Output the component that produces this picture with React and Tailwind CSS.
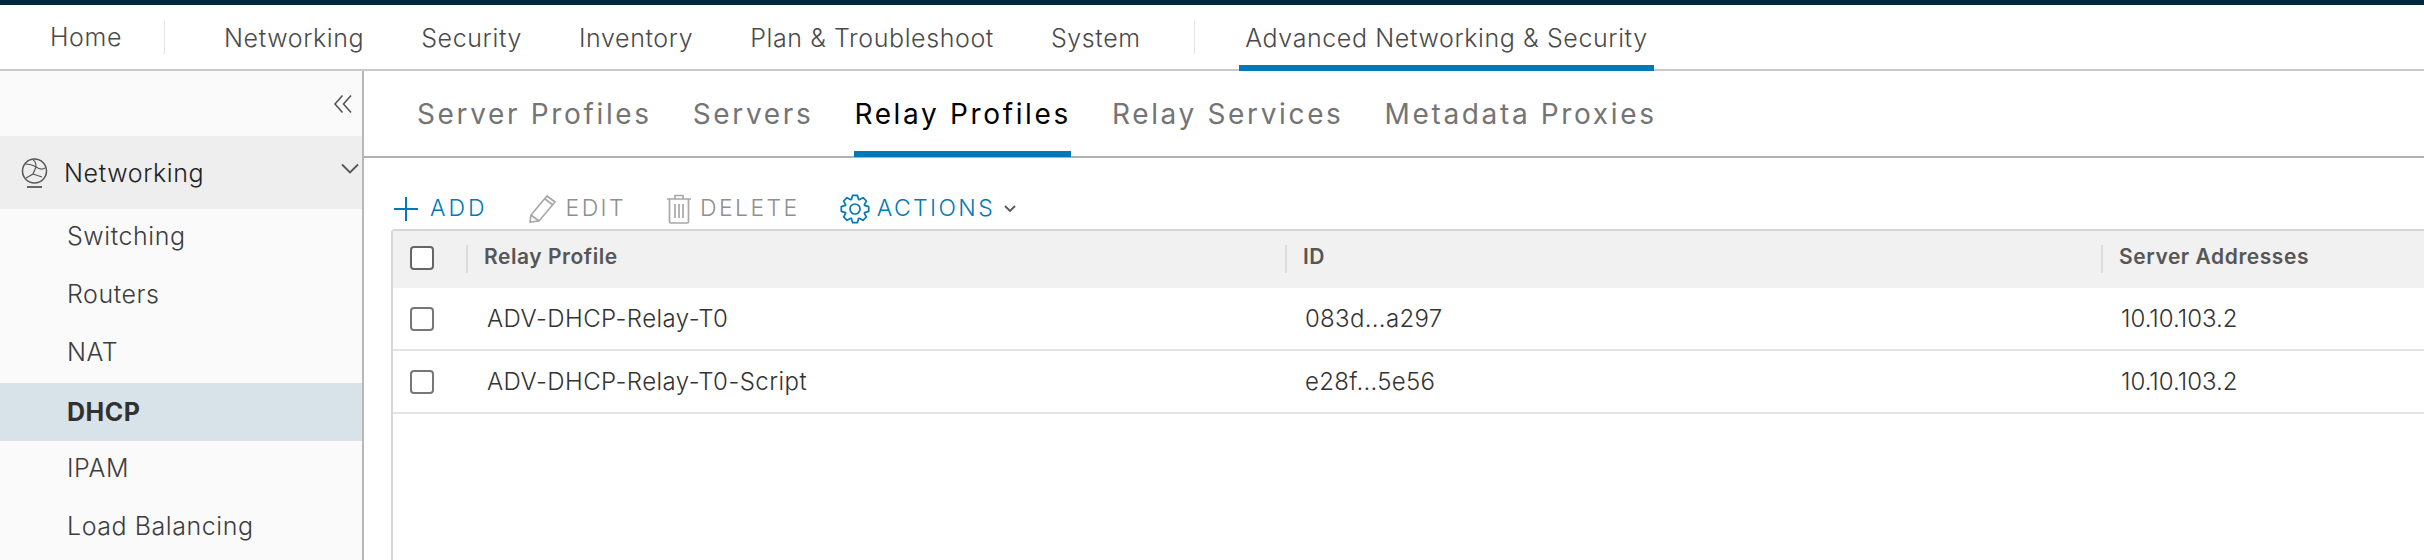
const FONT = "font-['Inter','Noto_Sans',sans-serif]";

const gearPath = (() => {
  const pts = [];
  for (let i = 0; i < 8; i++) {
    const a = (i * Math.PI) / 4 - Math.PI / 2;
    const at = (r, d) => `${(15 + r * Math.cos(a + d)).toFixed(2)} ${(15 + r * Math.sin(a + d)).toFixed(2)}`;
    pts.push(at(10.2, -0.36), at(13.9, -0.17), at(13.9, 0.17), at(10.2, 0.36));
  }
  return "M" + pts.join("L") + "Z";
})();

function NavItem({ children, className = "" }) {
  return <span className={`text-[25px] font-light tracking-[0.6px] leading-none text-[#4a4a4a] whitespace-nowrap ${className}`}>{children}</span>;
}

function Divider() {
  return <div className="w-px h-[33px] bg-[#e4e4e4]" />;
}

function SubTab({ children, active }) {
  return (
    <div className={`h-full flex items-center border-b-[6px] tracking-[2.65px] text-[28px] whitespace-nowrap -mb-[1px] pt-[6px] ${active ? "border-[#0079b8] text-black" : "border-transparent text-[#747474]"}`}>
      {children}
    </div>
  );
}

function Check({ dark }) {
  return <div className={`w-[24px] h-[24px] rounded-[4px] border-2 bg-white ${dark ? "border-[#666]" : "border-[#777]"}`} />;
}

function SideItem({ children, active }) {
  return (
    <div className={`h-[58px] flex items-center pl-[67px] text-[25px] tracking-[0.55px] ${active ? "bg-[#d8e3e9] font-bold text-[#313131] pt-[2px]" : "text-[#3d3d3d] font-light pb-[3px]"}`}>
      {children}
    </div>
  );
}

function Row({ name, id, addr }) {
  return (
    <div className="flex h-[63px] border-b-2 border-[#e3e3e3] text-[24px] font-light text-[#333] items-center">
      <div className="w-[76px] pl-[17px] shrink-0"><Check /></div>
      <div className="w-[819px] pl-[18px] shrink-0 tracking-[0.45px]">{name}</div>
      <div className="w-[816px] pl-[17px] shrink-0 tracking-[0.3px]">{id}</div>
      <div className="pl-[17px]">{addr}</div>
    </div>
  );
}

function HeadCell({ children, className }) {
  return (
    <div className={`flex items-center shrink-0 h-full pb-[2px] ${className}`}>
      <div className="w-[2px] h-[28px] bg-[#dcdcdc] mr-[16px]" />
      <span className="text-[21px] font-semibold text-[#565656] tracking-[0.55px] -mt-[3px]">{children}</span>
    </div>
  );
}

export default function App() {
  return (
    <div className={`w-[2424px] h-[560px] overflow-hidden bg-white flex flex-col ${FONT}`}>
      <div className="h-[5px] bg-[#00263e] shrink-0" />
      <header className="h-[66px] shrink-0 border-b-2 border-[#c9c9c9] flex items-center relative">
        <div className="pl-[50px] w-[164px] pt-[2px]"><NavItem>Home</NavItem></div>
        <Divider />
        <div className="flex items-center gap-[57px] pl-[59px] w-[1029px] pt-[2px]">
          <NavItem>Networking</NavItem>
          <NavItem>Security</NavItem>
          <NavItem>Inventory</NavItem>
          <NavItem>Plan &amp; Troubleshoot</NavItem>
          <NavItem>System</NavItem>
        </div>
        <Divider />
        <div className="ml-[44px] h-[66px] -mb-[2px] w-[415px] border-b-[6px] border-[#0079b8] flex items-center justify-center pt-[6px]">
          <NavItem>Advanced Networking &amp; Security</NavItem>
        </div>
      </header>
      <div className="flex-1 flex min-h-0">
        <aside className="w-[364px] shrink-0 bg-[#fafafa] border-r-2 border-[#b7b7b7] flex flex-col">
          <div className="h-[65px] flex justify-end items-center pr-[9px] shrink-0">
            <svg width="20" height="20" viewBox="0 0 20 20" fill="none" stroke="#565656" strokeWidth="1.6"><path d="M9.5 1.5 2 10l7.5 8.5M18 1.5 10.5 10 18 18.5" /></svg>
          </div>
          <div className="h-[73px] bg-[#eeeeee] flex items-center pl-[21px] relative shrink-0">
            <svg width="27" height="30" viewBox="0 0 27 30" fill="none" stroke="#565656" strokeWidth="1.5">
              <circle cx="13.5" cy="13" r="12" />
              <path d="M4 6c4 0 8 1 11 3s6 3 9 1M15 9l-3 7-7 4M12 16l9 3M12 2c3 1 3 4 3 7" strokeWidth="1.2"/>
              <path d="M6 29h15" strokeWidth="1.8" />
            </svg>
            <span className="ml-[16px] text-[25px] font-light text-[#222] tracking-[0.6px] pt-[2px]">Networking</span>
            <svg className="absolute right-[3px] top-[27px]" width="18" height="12" viewBox="0 0 18 12" fill="none" stroke="#565656" strokeWidth="1.8"><path d="m1 1.5 8 8 8-8" /></svg>
          </div>
          <SideItem>Switching</SideItem>
          <SideItem>Routers</SideItem>
          <SideItem>NAT</SideItem>
          <SideItem active>DHCP</SideItem>
          <SideItem>IPAM</SideItem>
          <SideItem>Load Balancing</SideItem>
        </aside>
        <main className="flex-1 min-w-0 flex flex-col">
          <nav className="h-[87px] shrink-0 border-b-2 border-[#b0b0b0] flex items-center pl-[53px] gap-[41px]">
            <SubTab>Server Profiles</SubTab>
            <SubTab>Servers</SubTab>
            <SubTab active>Relay Profiles</SubTab>
            <SubTab>Relay Services</SubTab>
            <SubTab>Metadata Proxies</SubTab>
          </nav>
          <div className="h-[71px] shrink-0 flex items-center pl-[29px] pt-[30px] text-[23px] font-light tracking-[2.4px]">
            <svg width="26" height="26" viewBox="0 0 26 26" fill="none" stroke="#0079b8" strokeWidth="2"><path d="M13 1v24M1 13h24" /></svg>
            <span className="ml-[11px] text-[#0079b8] tracking-[3px]">ADD</span>
            <svg className="ml-[40px]" width="30" height="30" viewBox="0 0 30 30" fill="none" stroke="#a8a8a8" strokeWidth="1.7"><path d="M2 28l1-7L19 2l8 6-16 19zM3 21l8 6M17 5l8 6" /></svg>
            <span className="ml-[8px] text-[#8f8f8f]">EDIT</span>
            <svg className="ml-[40px]" width="26" height="30" viewBox="0 0 26 30" fill="none" stroke="#a8a8a8" strokeWidth="1.7"><path d="M1 5h24M9 5V1.5h8V5M3.5 5v22.5a1.5 1.5 0 0 0 1.5 1.5h16a1.5 1.5 0 0 0 1.5-1.5V5M9 10v14M13 10v14M17 10v14" /></svg>
            <span className="ml-[8px] text-[#8f8f8f]">DELETE</span>
            <svg className="ml-[40px]" width="30" height="30" viewBox="0 0 30 30" fill="none" stroke="#0079b8" strokeWidth="1.7" strokeLinejoin="round">
              <circle cx="15" cy="15" r="5" />
              <path d={gearPath} />
            </svg>
            <span className="ml-[7px] text-[#0079b8]">ACTIONS</span>
            <svg className="ml-[9px]" width="12" height="8" viewBox="0 0 12 8" fill="none" stroke="#565656" strokeWidth="1.8"><path d="m1 1 5 5 5-5" /></svg>
          </div>
          <section className="ml-[27px] flex-1 border-l-2 border-t-2 border-[#d7d7d7] rounded-tl-[4px] min-h-0">
            <div className="h-[57px] bg-[#f1f1f1] flex items-center">
              <div className="w-[73px] pl-[17px] pb-[3px] shrink-0"><Check dark /></div>
              <HeadCell className="w-[819px]">Relay Profile</HeadCell>
              <HeadCell className="w-[816px]">ID</HeadCell>
              <HeadCell className="flex-1">Server Addresses</HeadCell>
            </div>
            <Row name="ADV-DHCP-Relay-T0" id="083d...a297" addr="10.10.103.2" />
            <Row name="ADV-DHCP-Relay-T0-Script" id="e28f...5e56" addr="10.10.103.2" />
          </section>
        </main>
      </div>
    </div>
  );
}
